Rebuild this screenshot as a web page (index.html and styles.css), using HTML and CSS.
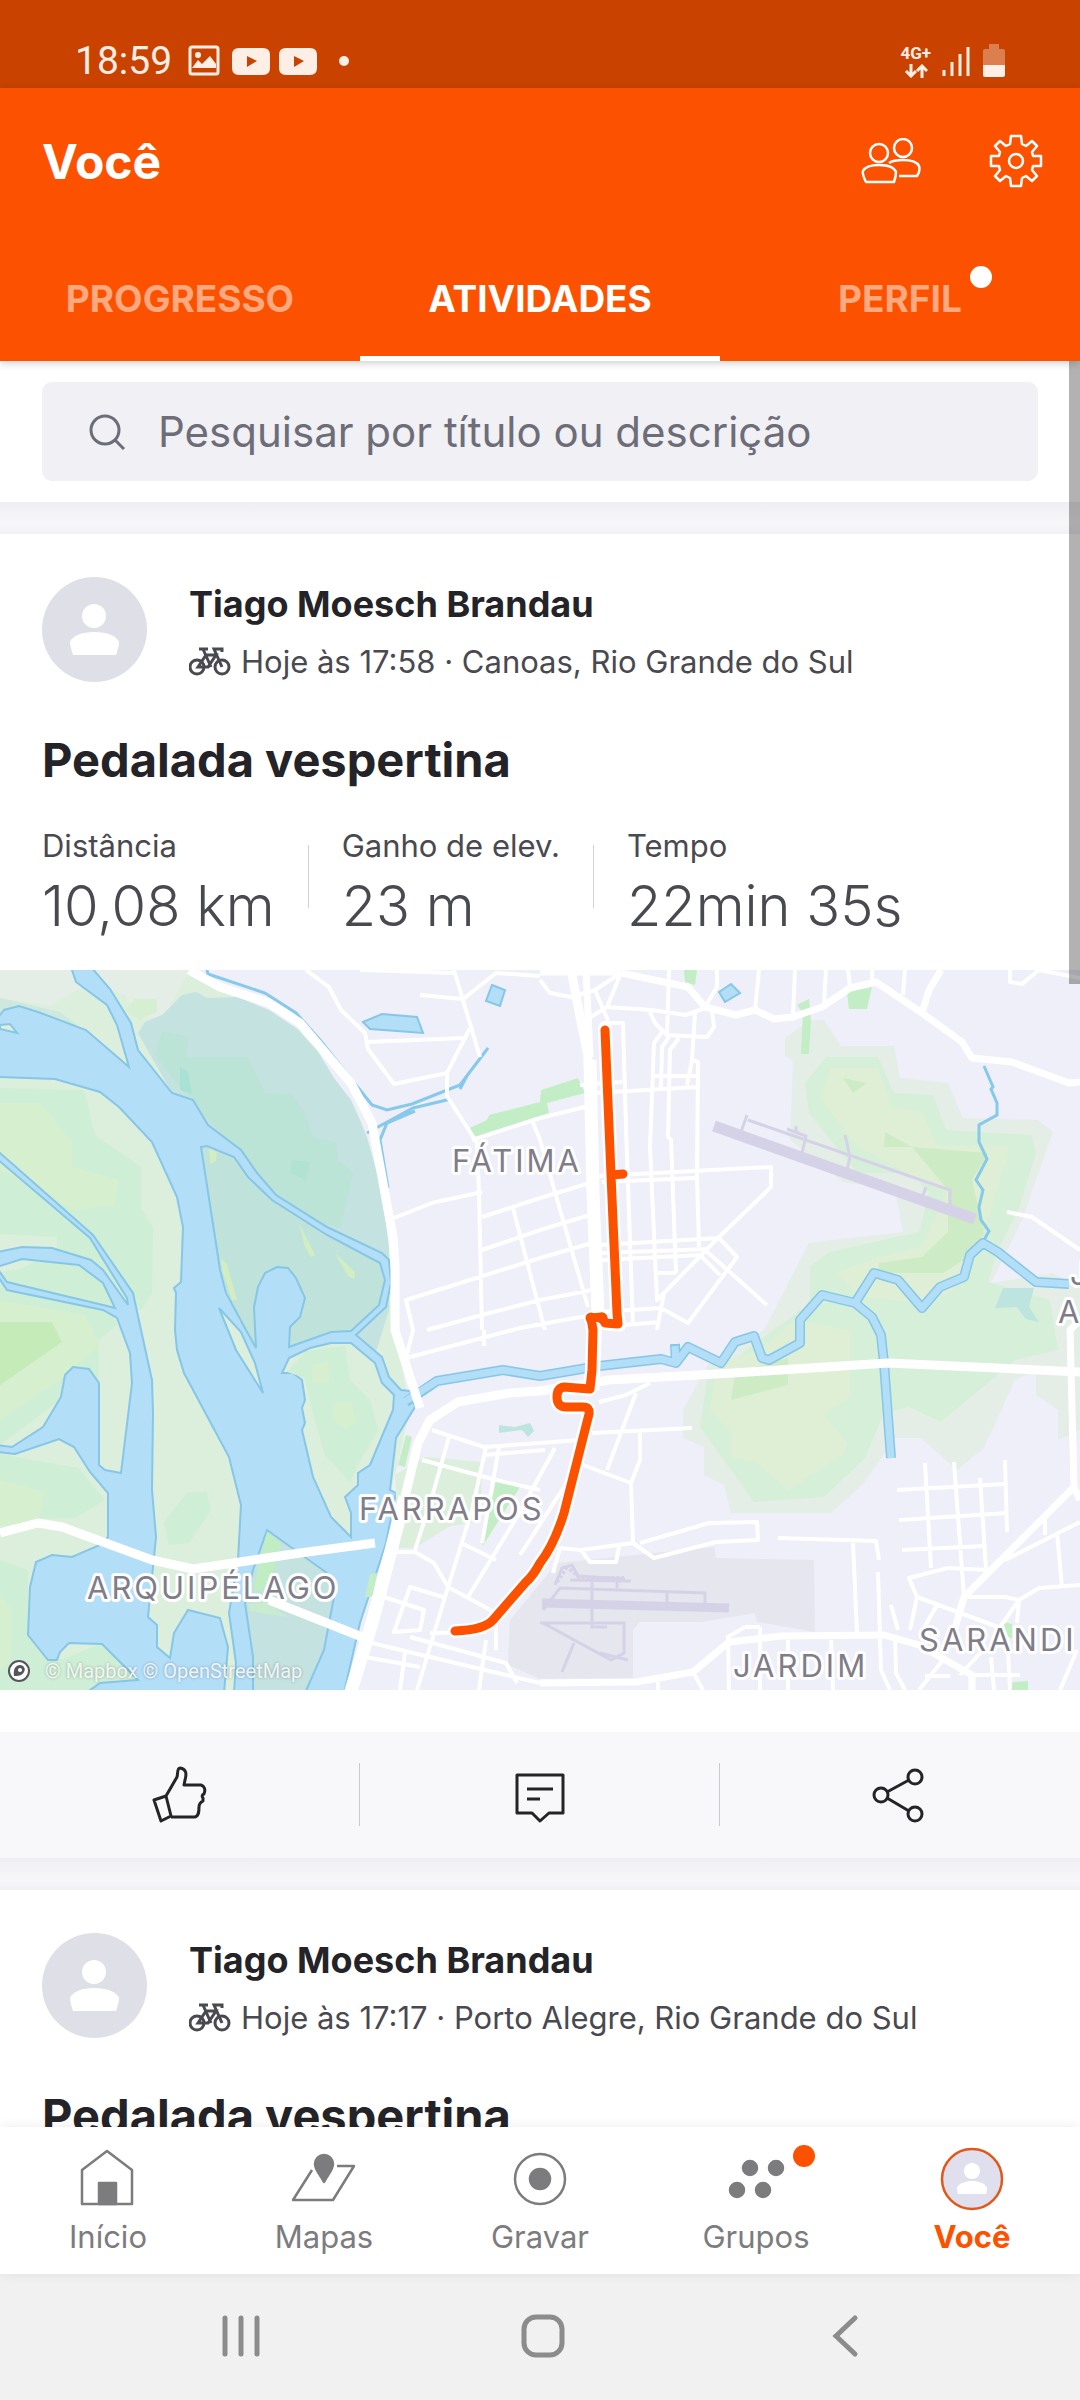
FILE: index.html
```html
<!DOCTYPE html>
<html lang="pt-BR">
<head>
    <meta charset="UTF-8">
    <meta name="viewport" content="width=device-width, initial-scale=1.0">
    <title>Você - Atividades</title>
    <link rel="stylesheet" href="styles.css">
</head>
<body>
    <!-- Símbolos reutilizados -->
    <svg class="symbols" aria-hidden="true">
        <symbol id="person" viewBox="0 0 105 105">
            <circle cx="52" cy="39" r="12" />
            <path d="M31 78 C29 72 28 68 28 65 C30 59 40 55 52 55 C65 55 75 59 77 65 C77 68 76 72 74 78 Z" />
        </symbol>
        <symbol id="bike" viewBox="0 0 42 30">
            <circle cx="8" cy="20" r="7" />
            <circle cx="33" cy="20" r="7" />
            <path d="M9 20 L17 8 H27 L19 20 Z M10 2 H19 M14 2 L22 20 M33 20 L25 2 H33 V5" />
        </symbol>
    </svg>

    <div class="app">
        <!-- Barra de status -->
        <div class="status-bar">
            <div class="status-group">
                <span class="clock">18:59</span>
                <svg class="status-left-icons" viewBox="0 0 164 32" aria-hidden="true">
                    <rect x="2" y="2" width="28" height="27" rx="2" fill="none" stroke="currentColor" stroke-width="3" />
                    <circle cx="10" cy="10" r="3" />
                    <path d="M4 23 L10 15 L14 19 L22 11 L28 19 V23 Z" />
                    <path fill-rule="evenodd" d="M51 3 H75 Q82 3 82 10 V23 Q82 30 75 30 H51 Q44 30 44 23 V10 Q44 3 51 3 Z M59 11 V22 L69 16 Z" />
                    <path fill-rule="evenodd" d="M98 3 H122 Q129 3 129 10 V23 Q129 30 122 30 H98 Q91 30 91 23 V10 Q91 3 98 3 Z M106 11 V22 L116 16 Z" />
                    <circle cx="156" cy="16" r="5" />
                </svg>
            </div>
            <div class="status-group">
                <div class="network">
                    <span>4G+</span>
                    <svg viewBox="0 0 24 14" aria-hidden="true">
                        <path d="M7 0 V12 M2 7 L7 12 L12 7 M18 14 V2 M13 7 L18 2 L23 7" />
                    </svg>
                </div>
                <svg class="signal" viewBox="0 0 28 32" aria-hidden="true">
                    <path d="M2 31 V25 M10 31 V17 M18 31 V9 M26 31 V2" />
                </svg>
                <svg class="battery" viewBox="0 0 22 34" aria-hidden="true">
                    <path opacity=".35" d="M6 0 H16 V5 H20 Q22 5 22 7 V21 H0 V7 Q0 5 2 5 H6 Z" />
                    <path d="M0 21 H22 V31 Q22 33 20 33 H2 Q0 33 0 31 Z" />
                </svg>
            </div>
        </div>

        <header class="header">
            <div class="toolbar">
                <h1>Você</h1>
                <div class="toolbar-actions">
                    <button type="button" aria-label="Amigos">
                        <svg class="icon-people" viewBox="0 0 60 46">
                            <circle cx="18" cy="15" r="9" />
                            <circle cx="42" cy="10" r="9" />
                            <path d="M5 44 C3 40 1 36 2 33 C4 29 10 27 18 27 C27 27 33 29 35 34 C35 38 34 41 33 44 Z" />
                            <path d="M28 25 C32 22 37 22 42 22 C50 22 56 24 58 28 C59 31 58 35 56 38 H38" />
                        </svg>
                    </button>
                    <button type="button" aria-label="Configurações">
                        <svg class="icon-gear" viewBox="-27 -27 54 54">
                            <circle r="7" />
                            <path d="M-5 -25 H5 L6 -17 L10 -15 L16 -20 L21 -15 L16 -9 L17 -5 L25 -5 V5 L17 5 L16 9 L21 15 L16 20 L10 15 L6 17 L5 25 H-5 L-6 17 L-10 15 L-16 20 L-21 15 L-16 9 L-17 5 L-25 5 V-5 L-17 -5 L-16 -9 L-21 -15 L-16 -20 L-10 -15 L-6 -17 Z" />
                        </svg>
                    </button>
                </div>
            </div>
            <nav class="tabs">
                <a href="#progresso">PROGRESSO</a>
                <a href="#atividades" class="active" aria-current="page">ATIVIDADES</a>
                <a href="#perfil"><span class="with-badge">PERFIL<span class="tab-badge"></span></span></a>
            </nav>
        </header>

        <main class="feed">
            <div class="scrollbar"></div>

            <form class="search">
                <label for="busca" aria-label="Pesquisar">
                    <svg viewBox="0 0 36 36"><circle cx="16" cy="16" r="14" /><path d="M26 26 L35 35" /></svg>
                </label>
                <input type="text" id="busca" placeholder="Pesquisar por título ou descrição">
            </form>

            <article class="card">
                <div class="card-head">
                    <svg class="avatar" viewBox="0 0 105 105"><use href="#person" /></svg>
                    <div>
                        <h2>Tiago Moesch Brandau</h2>
                        <p class="meta"><svg class="bike"><use href="#bike" /></svg>Hoje às 17:58 · Canoas, Rio Grande do Sul</p>
                    </div>
                </div>
                <h3>Pedalada vespertina</h3>
                <dl class="stats">
                    <div><dt>Distância</dt><dd>10,08 km</dd></div>
                    <div><dt>Ganho de elev.</dt><dd>23 m</dd></div>
                    <div><dt>Tempo</dt><dd>22min 35s</dd></div>
                </dl>

                <div class="map">
                    <svg viewBox="0 0 1080 720" role="img" aria-label="Mapa do percurso">
                        <!-- Vegetação a oeste -->
                        <path fill="#dceedc" d="M0 0 H185 L230 25 L300 60 L360 150 L395 300 V360 L410 440 L345 720 H0 Z" />
                        <path fill="#e4eee6" d="M0 0 H190 L165 45 L140 50 L125 25 L90 12 L50 36 L0 28 Z" />
                        <path fill="#cde8dd" d="M0 28 L60 42 L80 58 L0 60 Z" />
                        <path fill="#d6efd3" d="M125 40 L135 29 H157 V42 L140 50 Z" />
                        <path fill="#cfeed6" d="M0 118 L84 120 L95 165 L141 197 V238 L153 257 L152 323 L141 340 H0 Z" />
                        <path fill="#d6efcf" d="M0 133 H41 L72 172 V197 L119 210 L115 235 L74 240 L0 200 Z" />
                        <path fill="#dceedc" d="M0 264 L57 267 V280 L0 310 Z" />
                        <path fill="#cfeed6" d="M0 302 L40 296 L90 300 L120 360 L125 400 L60 430 L0 475 Z" />
                        <path fill="#d6efcf" d="M0 330 L85 345 L100 375 L60 410 L0 450 Z" />
                        <path fill="#c5ebb9" d="M0 352 H52 L62 372 L0 415 Z" />
                        <path fill="#dceedc" d="M99 370 L122 350 L132 413 L121 503 L99 495 Z" />
                        <path fill="#cfeed6" d="M0 484 L78 498 L105 530 L75 548 L0 550 Z" />
                        <path fill="#d6efcf" d="M0 510 L45 522 L38 550 L0 556 Z" />
                        <path fill="#cfeed6" d="M0 590 L28 600 V665 L60 690 L100 674 L138 710 L86 720 H0 Z" />
                        <path fill="#d6efcf" d="M0 625 L12 640 L10 690 L0 700 Z" />
                        <path fill="#cfeed6" d="M188 522 H207 L211 540 L189 573 L169 575 L164 552 Z" />
                        <path fill="#c3e2e0" d="M138 63 L145 52 L162 45 L182 25 L196 22 L207 28 L238 27 L269 40 L296 58 L317 80 L334 108 L351 130 L360 150 L367 167 L379 210 L386 253 L389 280 V340 L375 385 L290 377 L208 155 L172 123 Z" />
                        <path fill="#bbe3d6" d="M186 87 H248 L265 123 L293 125 L303 140 L313 167 L336 173 L338 190 L353 203 L341 257 L300 250 L190 130 L155 85 L162 62 L188 66 Z" />
                        <path fill="#b2e2d2" d="M292 190 L310 192 L306 210 L290 203 Z" />

                        <!-- Rios e lagos -->
                        <g class="water">
                            <path d="M0 45 L4 40 L19 36 L38 42 L86 60 L129 97 L117 55 L107 35 L76 12 L71 -3 H91 L110 19 L131 53 L138 80 L172 123 L193 130 L208 155 L241 180 L257 203 L276 225 L327 257 L382 283 L389 290 L391 313 L386 337 L356 365 L382 387 L389 407 L401 420 L410 421 L415 437 L396 468 L390 520 L396 523 L386 573 L360 653 L344 723 H234 L236 693 L229 643 L238 590 L241 535 L229 487 L184 403 L177 380 L175 360 L176 323 L174 318 L181 312 L183 257 L177 227 L152 172 L119 137 L100 122 L55 109 L-3 107 V45 Z" />
                            <path d="M-3 183 L0 183 L93 265 L133 323 L141 360 L152 410 L153 443 L152 520 L156 567 L148 647 L157 655 V677 L170 688 L174 663 L188 640 L220 648 L228 677 L224 723 H86 L100 713 L138 710 L102 674 L69 673 L60 682 L57 690 L48 690 L28 665 L30 617 L36 592 L52 585 L72 587 L100 575 L108 567 V523 L90 502 L74 477 L59 469 L15 484 L-3 482 V475 L12 477 L43 457 L61 427 L65 405 L73 397 L89 399 L99 413 V495 L105 500 L121 503 L132 413 L130 383 L117 348 L103 340 L7 320 L-3 305 V298 L7 312 L103 335 L115 338 L103 313 L79 295 L22 289 L-3 297 V282 L22 277 L52 278 L91 290 L103 300 L128 335 L127 328 L90 268 L-3 189 Z" />
                            <path d="M363 52 L382 44 L417 47 L423 63 L370 59 Z" />
                            <path d="M492 15 L505 20 L500 36 L486 31 Z" />
                            <path d="M719 22 L731 14 L740 23 L725 32 Z" />
                        </g>

                        <!-- Ilhas -->
                        <g class="shore">
                            <path fill="#bfe3da" d="M201 177 L207 176 L234 187 L248 207 L272 230 L327 265 L380 293 L385 310 L379 335 L351 361 L331 362 L289 377 L290 357 L300 347 L305 328 L296 308 L288 298 L277 297 L265 303 L258 317 L254 337 L256 378 L246 360 L226 323 L220 300 L215 267 Z" />
                            <path fill="#dceedc" d="M219 338 L241 362 L255 393 L263 423 L236 380 Z" />
                            <path fill="#dceedc" d="M282 403 L289 388 L310 378 L331 373 H351 L375 393 L382 413 L394 425 L393 440 L370 495 L358 503 V515 L345 527 L351 543 V567 L331 547 L313 507 L302 460 L305 453 L302 438 L305 430 L302 410 L293 403 Z" />
                            <path fill="#c3e2e0" d="M267 560 L327 603 L334 627 L324 680 L305 723 H253 V687 L245 633 L253 600 Z" />
                            <path fill="#dceedc" d="M0 55 L10 54 L17 63 L0 59 Z" />
                        </g>
                        <path fill="#cfeed6" d="M287 402 L306 381 L345 376 L350 410 L370 430 L378 460 L358 495 L350 512 L325 485 L312 440 L305 408 Z" />
                        <path fill="#d6efcf" d="M334 432 L352 433 L356 452 L345 459 L333 450 Z M312 395 L328 391 L330 412 L312 414 Z" />
                        <path fill="#c1edc3" d="M267 562 L281 573 L275 600 L260 622 L253 620 Z" />
                        <path fill="#c9ecd0" d="M248 634 L265 632 L288 647 L250 641 Z" />
                        <path fill="#d2edc2" d="M299 253 L315 285 L311 287 L305 277 Z M335 283 L355 302 L354 309 L348 306 Z M209 178 L217 182 L216 191 L210 194 Z M221 288 L227 294 L237 330 L232 330 L222 300 Z" />
                        <path fill="#a9e2d5" d="M180 97 L188 101 L192 124 L180 120 Z" />

                        <!-- Vegetação a leste -->
                        <path fill="#e4eee6" d="M785 68 L810 50 H824 L841 76 H894 L900 108 L948 113 L963 148 L1038 150 L1053 162 L1022 250 L991 313 L1053 303 L1080 318 V460 L1058 470 V440 L1036 425 V400 L1015 410 L984 478 L957 500 L921 468 H895 L864 513 L831 543 H731 L724 515 L704 505 V477 L683 468 V440 L709 393 L764 360 L809 273 L903 262 L895 220 L843 212 L790 170 L793 90 L785 86 Z" />
                        <path fill="#d6efd8" d="M826 87 H878 L894 123 L933 125 L946 160 L1032 165 L1036 183 L1019 238 L998 280 L988 312 L1050 330 L1058 380 L1015 390 L941 452 L909 437 L884 443 L865 488 L824 527 L754 532 L733 503 L700 457 L707 410 L760 370 L810 333 V297 L829 282 L919 262 L929 223 L912 203 H857 L809 143 L805 113 Z" />
                        <path fill="#dfefd6" d="M831 98 H878 L891 137 L922 142 L936 175 L1010 177 L988 250 L965 290 L953 320 L926 333 L860 327 L836 303 L878 287 L922 277 L946 223 L857 177 L821 128 Z" />
                        <path fill="#cdebc5" d="M912 177 L988 183 L972 210 L984 263 L964 290 L943 303 H878 L879 293 L922 287 L948 262 V220 Z M885 162 L912 177 H884 Z M843 108 L867 113 L853 123 Z" />
                        <path fill="#dfefd6" d="M795 350 L850 360 V427 L824 445 L847 473 L845 483 L788 520 L757 493 L731 487 V460 L709 440 L719 393 L760 380 Z" />
                        <path fill="#cdebc5" d="M735 403 L788 388 V415 L731 430 Z" />
                        <path fill="#c3eec5" d="M470 158 L487 150 L489 145 L540 132 L541 120 L578 108 L585 123 L547 133 L549 143 L475 167 Z M847 22 L872 17 L867 39 H849 Z M797 35 L809 29 L811 50 L809 84 H801 L803 43 Z M684 0 H697 L695 15 L685 12 Z" />
                        <path fill="#bde4df" d="M1003 318 H1034 L1029 337 L1039 352 L1026 349 L1017 337 L995 338 Z M499 455 L515 457 L530 453 L534 461 L528 467 L522 460 L499 463 Z" />
                        <path fill="#dceedc" d="M425 487 L482 492 L480 552 L450 556 L415 578 H398 L395 505 Z" />
                        <path fill="#c3eec5" d="M496 510 L505 512 L520 517 L482 577 Z M406 465 L412 467 L405 497 L398 495 Z M370 604 L377 603 L373 626 L365 628 Z M1003 652 L1012 654 L1012 668 L1005 666 Z M1013 712 L1028 711 V720 H1010 Z" />

                        <!-- Aeroportos -->
                        <path fill="#e6e6ef" d="M557 593 L714 577 L716 588 L814 590 L815 662 L757 652 L755 643 L702 652 H640 L633 660 V708 L540 709 L508 695 L510 650 Z" />
                        <g class="runway">
                            <path stroke-width="11" d="M714 156 L975 249" />
                            <path stroke-width="9" d="M542 633 L729 638" />
                            <path stroke-width="3" d="M747 145 L741 162 M748 150 L950 220 V236 M787 159 L806 166 L802 183 M796 156 V162 M845 165 L850 187 L847 200 M926 217 L922 228" />
                            <path stroke-width="3" d="M543 640 L560 618 L705 623 V633 M667 622 V633 M592 607 V657 H607 M617 607 V618 M540 653 H624 V683 L611 690 L543 653 M574 673 L562 702 M555 615 L562 598 L572 595 L578 606 L625 609 M570 610 L631 611 M600 683 L628 690" />
                            <path stroke-width="4" stroke-dasharray="3 2" d="M566 596 L580 608 L624 608 M557 612 L566 598" />
                        </g>

                        <!-- Canais -->
                        <g class="creek">
                            <path d="M207 0 L208 4 L265 23 L296 43 L320 70 L372 135 L387 140 L412 134 L460 115 L488 78 M367 163 L413 138 L451 129 M388 218 L380 170 L387 153 L415 141 M460 119 L467 106" />
                            <path d="M984 96 L993 117 L991 119 L997 133 V145 L979 155 V172 L987 189 L976 210 L983 220 L979 237 L981 250 L989 261 L983 272" />
                        </g>
                        <path class="river-bank" d="M406 432 L437 411 L503 400 L540 406 L599 396 L661 389 L676 393 L688 377 L721 393 L735 372 L754 366 L762 388 L769 390 L800 373 V350 L822 325 L855 333 L872 347 L881 365 L884 393 L891 488 M855 333 L874 303 L898 310 L922 338 L940 317 L964 307 L970 285 L983 273 L998 282 L1036 312 L1069 314 M676 393 L675 374" />
                        <path class="river" d="M404 432 L437 411 L503 400 L540 406 L599 396 L661 389 L676 393 L688 377 L721 393 L735 372 L754 366 L762 388 L769 390 L800 373 V350 L822 325 L855 333 L872 347 L881 365 L884 393 L891 488 M855 333 L874 303 L898 310 L922 338 L940 317 L964 307 L970 285 L983 273 L998 282 L1036 312 L1069 314 M676 393 L675 376" />

                        <!-- Ruas -->
                        <g class="streets">
                            <path d="M306 0 L329 17 L341 40 L365 63 L368 79 L394 114 L447 103 V126 L477 173 L479 223 L482 360 M368 72 L463 68 M420 25 L463 29 L496 3 L540 6 M360 0 L454 3 M454 0 L480 87 M470 58 L447 103 M394 248 L432 233 L482 222 M472 170 L540 148 L585 137 M482 247 L540 228 L590 213 M482 280 L540 260 L590 245 M406 388 L413 360 L406 330 L540 288 L592 273 M427 360 L482 345 L540 330 L592 320 M406 388 L520 358 L592 345 M532 150 L540 170 L588 337 M513 238 L537 330 L545 360 M484 360 V376" />
                            <path d="M540 10 L550 23 L571 27 L595 20 L621 3 M669 0 L667 67 M717 0 V17 L705 37 M759 0 L755 40 M795 0 L793 45 M826 0 L824 35 M848 0 L850 17 M872 0 V12 M905 0 L903 25 M607 37 L652 40 L686 45 L705 38 M621 3 L607 37 L586 50 M650 42 L655 53 L667 65 L707 67 L714 57 L712 40 M595 20 L609 53 L623 53 L626 157 L633 357 M662 62 L654 73 L650 177 L657 330 L664 323 M669 67 L662 77 L661 117 M679 68 L670 80 L668 167 L671 170 L676 303 M695 43 L692 90 L687 115 M692 90 L698 92 L697 207 L699 277 M595 123 L697 117 M580 115 L622 112 M652 106 H697 M599 206 L771 197 V217 L719 267 L664 323 L657 360 M602 212 L695 208 M600 275 L719 268 M600 283 L709 279 M602 290 L700 285 M719 268 L737 287 L688 353 L661 338 L599 342 M705 280 L767 335 M700 285 L720 305 M655 303 H676 M600 357 L660 352" />
                            <path d="M432 460 L484 477 L540 473 L580 470 M484 485 L545 480 M422 490 L496 510 L540 520 M449 467 L432 527 L415 580 M486 477 L472 540 L448 617 L417 720 M499 477 L482 573 M555 478 L517 547 L468 627 M396 582 H415 L434 593 L448 617 L496 643 V680 M461 573 L496 590 M384 627 L424 640 L420 660 L394 662 L410 617 L443 627 M372 673 L413 683 L540 713 M410 667 L506 693 L517 713 M365 687 L420 697 M430 663 L486 662 M405 683 L400 720 M486 670 L479 720 M575 500 L520 585" />
                            <path d="M592 463 L692 458 M636 423 L607 500 M640 460 V490 L631 513 L633 573 M578 493 L631 513 M599 432 L626 425 L650 413 M640 573 L709 553 L757 552 L758 570 L716 572 L654 588 L633 573 L581 580 L590 592 L616 592 L619 577 M581 580 L560 578 L553 603 M778 568 L876 571 L879 590 M878 602 L881 700 L890 720 M853 573 L857 663 M891 635 L898 660 M925 493 L931 598 M954 492 L964 627 M980 508 L986 598 M1005 490 L1007 562 M897 520 L1005 514 M899 550 L1007 543 M902 580 L984 576 M988 600 L948 598 L909 608 L917 627 L998 657 M917 627 L910 660 M937 635 L920 665 M1005 590 L1080 552 M1045 547 V565 M1057 563 L1062 617 M967 627 L1005 627 L1019 630 L1039 618 L1080 615 M1019 630 L998 660 M1019 630 L1017 653 M943 690 L919 720 M1008 680 L1010 720 M991 687 L994 720 M983 680 L960 705 M1077 680 L1060 720 M895 667 L896 703 L905 720 M788 670 V720 M831 670 L833 720 M745 657 L728 667 L729 720 M760 657 V720 M745 657 H760 M693 702 L703 720 M658 712 V720 M925 706 H950 M975 705 H1020 M1007 242 L1032 247 L1080 280 M1010 0 V12 L1022 14 L1039 0 L1080 8" />
                        </g>
                        <g class="avenues">
                            <path d="M621 3 L688 17 L705 37 L736 45 L755 40 L774 49 L793 47 L822 37 L850 18 L876 12 L922 43 L962 72 L972 88 L1012 92 L1069 113 L1080 112 M941 0 L929 20 L922 43" />
                            <path d="M540 713 L636 712 L693 702 L729 672 L781 666 L884 665 L919 675 L972 705 V720 M953 665 L964 627 L1001 590 L1074 517 L1080 530 M1074 517 L1070 360 L1080 350 M586 0 L590 87 M540 2 H621" />
                        </g>
                        <g class="highways">
                            <path d="M189 0 L220 17 L269 33 L300 53 L351 113 L372 153 L393 267 L395 297 V360 L420 438" />
                            <path d="M350 720 L372 653 L405 527 L418 473 L430 450 L458 432 L510 423 L540 421 L609 410 L733 403 L888 393 L1080 402" />
                            <path d="M0 563 L38 553 L62 557 L152 590 L193 599 L300 583 L375 573 M269 630 L362 667" />
                            <path d="M571 0 L588 87 L593 223 L598 343 L595 420" />
                            <path stroke-width="13" d="M590 90 L593 223 L598 343 M350 724 L372 653 L405 527" />
                        </g>

                        <!-- Percurso -->
                        <g class="route">
                            <path class="route-case" d="M605 58 L611 205 L617 343 L619 355 L605 353 L602 347 L591 348 L593 360 L592 400 L590 419 L564 417 Q557 418 557 427 Q557 437 566 437 H583 Q590 437 589 444 L564 543 Q554 575 540 593 Q533 606 526 612 L493 650 Q484 660 455 661" />
                            <path d="M605 60 L611 205 L617 343 L618 354 L605 353 L602 347 L591 348 L593 360 L592 400 L590 419 L564 417 Q557 418 557 427 Q557 437 566 437 H583 Q590 437 589 444 L564 543 Q554 575 540 593 Q533 606 526 612 L493 650 Q484 660 455 661 M611 205 L623 204" />
                            <circle cx="591" cy="348" r="1" />
                            <circle cx="602" cy="348" r="1" />
                        </g>

                        <!-- Bairros -->
                        <g class="places">
                            <text x="452" y="202">FÁTIMA</text>
                            <text x="359" y="550">FARRAPOS</text>
                            <text x="87" y="629">ARQUIPÉLAGO</text>
                            <text x="919" y="681">SARANDI</text>
                            <text x="733" y="707">JARDIM</text>
                            <text x="1070" y="315">J</text>
                            <text x="1058" y="353">A</text>
                        </g>
                    </svg>
                    <div class="map-credits">
                        <svg viewBox="0 0 24 24" aria-hidden="true">
                            <circle cx="12" cy="12" r="10" />
                            <path d="M7 17 C6 11 8 6 13 6 C17 6 19 10 17 13 C15 17 11 17 7 17 Z" />
                            <circle class="credit-dot" cx="13" cy="11" r="2" />
                        </svg>
                        <a href="#mapbox">© Mapbox</a>
                        <a href="#osm">© OpenStreetMap</a>
                    </div>
                </div>

                <div class="actions">
                    <button type="button" aria-label="Curtir">
                        <svg viewBox="0 0 60 60">
                            <path d="M4 35 L16 31 L21 51 L11 56 Z M16 31 L27 12 C28 8 27 3 30 3 C36 4 37 8 35 15 L34 20 H51 C54 21 56 24 54 29 Q51 30 53 33 V36 Q49 38 49 42 C49 46 49 51 45 52 H21" />
                        </svg>
                    </button>
                    <button type="button" aria-label="Comentar">
                        <svg viewBox="0 0 60 60">
                            <path d="M7 10 H53 V48 H39 L30 56 L22 48 H7 Z M17 24 H43 M17 34 H30" />
                        </svg>
                    </button>
                    <button type="button" aria-label="Compartilhar">
                        <svg viewBox="0 0 60 60">
                            <circle cx="11" cy="30" r="7" /><circle cx="45" cy="12" r="7" /><circle cx="45" cy="49" r="7" />
                            <path d="M17 27 L39 15 M17 33 L39 46" />
                        </svg>
                    </button>
                </div>
            </article>

            <article class="card">
                <div class="card-head">
                    <svg class="avatar" viewBox="0 0 105 105"><use href="#person" /></svg>
                    <div>
                        <h2>Tiago Moesch Brandau</h2>
                        <p class="meta"><svg class="bike"><use href="#bike" /></svg>Hoje às 17:17 · Porto Alegre, Rio Grande do Sul</p>
                    </div>
                </div>
                <h3>Pedalada vespertina</h3>
            </article>
        </main>

        <nav class="bottom-nav">
            <a href="#inicio">
                <svg viewBox="0 0 64 64">
                    <path d="M6 23 L31 4 L56 23 V57 H6 Z" />
                    <path class="solid" d="M23 36 H40 V57 H23 Z" />
                </svg>
                Início
            </a>
            <a href="#mapas">
                <svg viewBox="0 0 64 64">
                    <path d="M20 23 L1 53 H41 L62 19 H45" />
                    <path class="solid" d="M32 35 C28 27 23 23 23 17 A9 9 0 0 1 41 17 C41 23 36 27 32 35 Z" />
                </svg>
                Mapas
            </a>
            <a href="#gravar">
                <svg viewBox="0 0 64 64">
                    <circle cx="32" cy="32" r="25" />
                    <circle class="solid" cx="32" cy="32" r="10" />
                </svg>
                Gravar
            </a>
            <a href="#grupos">
                <svg viewBox="0 0 64 64">
                    <g class="solid"><circle cx="26" cy="21" r="7" /><circle cx="52" cy="21" r="7" /><circle cx="13" cy="43" r="7" /><circle cx="39" cy="43" r="7" /></g>
                    <circle class="badge" cx="80" cy="9" r="11" />
                </svg>
                Grupos
            </a>
            <a href="#voce" class="active" aria-current="page">
                <svg viewBox="0 0 64 64">
                    <circle class="me" cx="32" cy="32" r="30" />
                    <path class="me-person" d="M18 47 C17 45 17 42 17 41 C19 36 25 34 32 34 C39 34 45 36 47 41 C47 42 47 45 46 47 Z" />
                    <circle class="me-person" cx="32" cy="24" r="8" />
                </svg>
                Você
            </a>
        </nav>

        <!-- Navegação do sistema -->
        <div class="system-nav">
            <button type="button" aria-label="Recentes"><svg viewBox="0 0 44 44"><path d="M6 4 V40 M22 4 V40 M38 4 V40" /></svg></button>
            <button type="button" aria-label="Tela inicial"><svg viewBox="0 0 44 44"><rect x="3" y="3" width="38" height="38" rx="12" /></svg></button>
            <button type="button" aria-label="Voltar"><svg viewBox="0 0 44 44"><path d="M32 4 L13 22 L32 40" /></svg></button>
        </div>
    </div>
</body>
</html>
```

FILE: styles.css
```css
* {
    box-sizing: border-box;
}

body {
    margin: 0;
    font-family: Inter, "Liberation Sans", sans-serif;
    color: #242428;
    background: #ffffff;
}

h1, h2, h3, p, dl, dd {
    margin: 0;
}

button {
    padding: 0;
    border: none;
    background: none;
    color: inherit;
    cursor: pointer;
}

a {
    color: inherit;
    text-decoration: none;
}

svg {
    display: block;
}

.symbols {
    display: none;
}

.app {
    display: flex;
    flex-direction: column;
    height: 100vh;
}

/* Barra de status */
.status-bar {
    display: flex;
    flex-shrink: 0;
    justify-content: space-between;
    height: 88px;
    padding: 34px 75px 0;
    background: #ca4200;
    color: #fdeee6;
    font-family: Roboto, sans-serif;
}

.status-group {
    display: flex;
    align-items: center;
    height: 54px;
}

.clock {
    font-size: 39px;
}

.status-left-icons {
    width: 164px;
    height: 32px;
    margin-left: 16px;
    fill: currentColor;
}

.network {
    display: flex;
    flex-direction: column;
    align-items: center;
    gap: 2px;
    font-size: 17px;
    line-height: 18px;
    font-weight: bold;
}

.network svg {
    width: 24px;
    height: 14px;
    fill: none;
    stroke: currentColor;
    stroke-width: 3;
}

.signal {
    width: 28px;
    height: 32px;
    margin-left: 11px;
    stroke: currentColor;
    stroke-width: 3;
}

.battery {
    width: 22px;
    height: 34px;
    margin-left: 13px;
    fill: currentColor;
}

/* Cabeçalho */
.header {
    position: relative;
    z-index: 2;
    flex-shrink: 0;
    background: #fc5200;
    color: #ffffff;
    box-shadow: 0 2px 8px rgba(0, 0, 0, 0.2);
}

.toolbar {
    display: flex;
    align-items: center;
    justify-content: space-between;
    height: 146px;
    padding: 0 37px 0 42px;
}

.toolbar h1 {
    font-size: 48px;
}

.toolbar-actions {
    display: flex;
    align-items: center;
    gap: 68px;
}

.toolbar-actions svg {
    fill: none;
    stroke: currentColor;
    stroke-width: 2.5;
    stroke-linejoin: round;
}

.icon-people {
    width: 60px;
    height: 46px;
}

.icon-gear {
    width: 54px;
    height: 54px;
}

.tabs {
    display: grid;
    grid-template-columns: repeat(3, 1fr);
    height: 127px;
}

.tabs a {
    display: flex;
    align-items: center;
    justify-content: center;
    border-top: 7px solid transparent;
    border-bottom: 5px solid transparent;
    color: #ffa980;
    font-size: 37px;
    font-weight: bold;
}

.tabs .active {
    border-bottom-color: #ffffff;
    color: #ffffff;
}

.with-badge {
    position: relative;
}

.tab-badge {
    position: absolute;
    top: -10px;
    right: -30px;
    width: 22px;
    height: 22px;
    border-radius: 50%;
    background: #ffffff;
}

/* Lista de atividades */
.feed {
    position: relative;
    flex: 1;
    min-height: 0;
    overflow: hidden;
}

.scrollbar {
    position: absolute;
    top: 0;
    right: 0;
    z-index: 1;
    width: 11px;
    height: 623px;
    background: rgba(0, 0, 0, 0.3);
}

.search {
    display: flex;
    align-items: center;
    gap: 33px;
    height: 99px;
    margin: 21px 42px;
    padding: 0 47px;
    border-radius: 10px;
    background: #f0f0f5;
}

.search svg {
    width: 36px;
    height: 36px;
    fill: none;
    stroke: #6d6d78;
    stroke-width: 3;
}

.search input {
    flex: 1;
    min-width: 0;
    padding: 0;
    border: none;
    outline: none;
    background: none;
    font-family: inherit;
    font-size: 42px;
}

.search input::placeholder {
    color: #6d6d78;
    opacity: 1;
}

.card::before {
    content: "";
    display: block;
    height: 32px;
    background: linear-gradient(#efeff3, #f7f7fa 70%, #f1f0f6);
}

.card-head {
    display: flex;
    gap: 42px;
    padding: 43px 42px 0;
}

.avatar {
    flex-shrink: 0;
    width: 105px;
    height: 105px;
    border-radius: 50%;
    background: #dfdfe8;
    fill: #ffffff;
}

.card h2 {
    font-size: 36px;
    line-height: 54px;
}

.meta {
    display: flex;
    align-items: center;
    gap: 10px;
    margin-top: 6px;
    color: #494950;
    font-size: 31px;
    line-height: 50px;
}

.bike {
    width: 42px;
    height: 30px;
    fill: none;
    stroke: currentColor;
    stroke-width: 3;
}

.card h3 {
    margin: 45px 42px 0;
    font-size: 47px;
    line-height: 56px;
}

.stats {
    display: flex;
    margin: 38px 42px 32px;
    color: #494950;
}

.stats div {
    display: flex;
    flex-direction: column;
    gap: 8px;
    position: relative;
    padding-right: 67px;
}

.stats div + div::before {
    content: "";
    position: absolute;
    top: 19px;
    left: -34px;
    width: 1px;
    height: 63px;
    background: #d0d0d6;
}

.stats dt {
    font-size: 31px;
    line-height: 40px;
}

.stats dd {
    font-size: 56px;
    font-weight: 300;
    line-height: 64px;
}

/* Mapa */
.map {
    position: relative;
    background: #eeeff8;
}

.map > svg {
    width: 100%;
}

.water {
    fill: #b3def7;
    stroke: #86c6e6;
    stroke-width: 2;
}

.shore {
    stroke: #86c6e6;
    stroke-width: 2;
}

.runway {
    fill: none;
    stroke: #d5d2e7;
}

.creek {
    fill: none;
    stroke: #86c9ea;
    stroke-width: 3;
}

.river,
.river-bank {
    fill: none;
    stroke: #b3def7;
    stroke-width: 7;
    stroke-linejoin: round;
}

.river-bank {
    stroke: #86c6e6;
    stroke-width: 10;
}

.streets,
.avenues,
.highways {
    fill: none;
    stroke: #ffffff;
    stroke-width: 4;
    stroke-linejoin: round;
}

.avenues {
    stroke-width: 7;
}

.highways {
    stroke-width: 9;
}

.route {
    fill: none;
    stroke: #fc5200;
    stroke-width: 9;
    stroke-linecap: round;
    stroke-linejoin: round;
}

.route-case {
    stroke: #ffffff;
    stroke-width: 14;
}

.places {
    fill: #7f7d89;
    stroke: #ffffff;
    stroke-width: 6;
    stroke-linejoin: round;
    paint-order: stroke;
    font-size: 31px;
    letter-spacing: 3px;
}

.map-credits {
    position: absolute;
    bottom: 6px;
    left: 7px;
    display: flex;
    align-items: center;
    gap: 5px;
    color: rgba(255, 255, 255, 0.85);
    font-family: Roboto, sans-serif;
    font-size: 20px;
    line-height: 26px;
    text-shadow: 0 0 3px rgba(0, 0, 0, 0.3);
}

.map-credits svg {
    width: 24px;
    height: 24px;
    margin-right: 9px;
    fill: #ffffff;
    stroke: #55555c;
    stroke-width: 2;
}

.map-credits path {
    fill: #55555c;
    stroke: none;
}

.map-credits .credit-dot {
    fill: #ffffff;
    stroke: none;
}

/* Curtir, comentar, compartilhar */
.actions {
    display: grid;
    grid-template-columns: repeat(3, 1fr);
    margin-top: 42px;
    padding: 31px 0 32px;
    background: #f8f8fb;
}

.actions button {
    display: flex;
    align-items: center;
    justify-content: center;
    height: 63px;
    border-right: 1px solid #c9c9cf;
}

.actions button:last-child {
    border-right: none;
}

.actions svg {
    width: 60px;
    height: 60px;
    fill: none;
    stroke: #242428;
    stroke-width: 3;
    stroke-linejoin: round;
}

/* Navegação inferior */
.bottom-nav {
    position: relative;
    z-index: 2;
    display: grid;
    flex-shrink: 0;
    grid-template-columns: repeat(5, 1fr);
    height: 147px;
    background: #ffffff;
    color: #7c7c7f;
    box-shadow: 0 0 12px rgba(0, 0, 0, 0.08);
}

.bottom-nav a {
    display: flex;
    flex-direction: column;
    align-items: center;
    gap: 6px;
    padding-top: 20px;
    font-size: 31px;
    line-height: 40px;
}

.bottom-nav svg {
    width: 64px;
    height: 64px;
    overflow: visible;
    fill: none;
    stroke: currentColor;
    stroke-width: 2.5;
    stroke-linejoin: round;
}

.bottom-nav .solid {
    fill: currentColor;
}

.bottom-nav .badge {
    fill: #fc5200;
    stroke: none;
}

.bottom-nav .me {
    fill: #dfdfee;
    stroke: #e2571a;
}

.bottom-nav .me-person {
    fill: #ffffff;
    stroke: none;
}

.bottom-nav .active {
    color: #fc5200;
    font-weight: bold;
}

.system-nav {
    display: grid;
    flex-shrink: 0;
    grid-template-columns: repeat(3, 1fr);
    height: 126px;
    padding: 0 84px 2px 90px;
    background: #f1f1f1;
}

.system-nav button {
    display: flex;
    align-items: center;
    justify-content: center;
}

.system-nav svg {
    width: 44px;
    height: 44px;
    fill: none;
    stroke: #8c8c8c;
    stroke-width: 5;
    stroke-linecap: round;
}
```
